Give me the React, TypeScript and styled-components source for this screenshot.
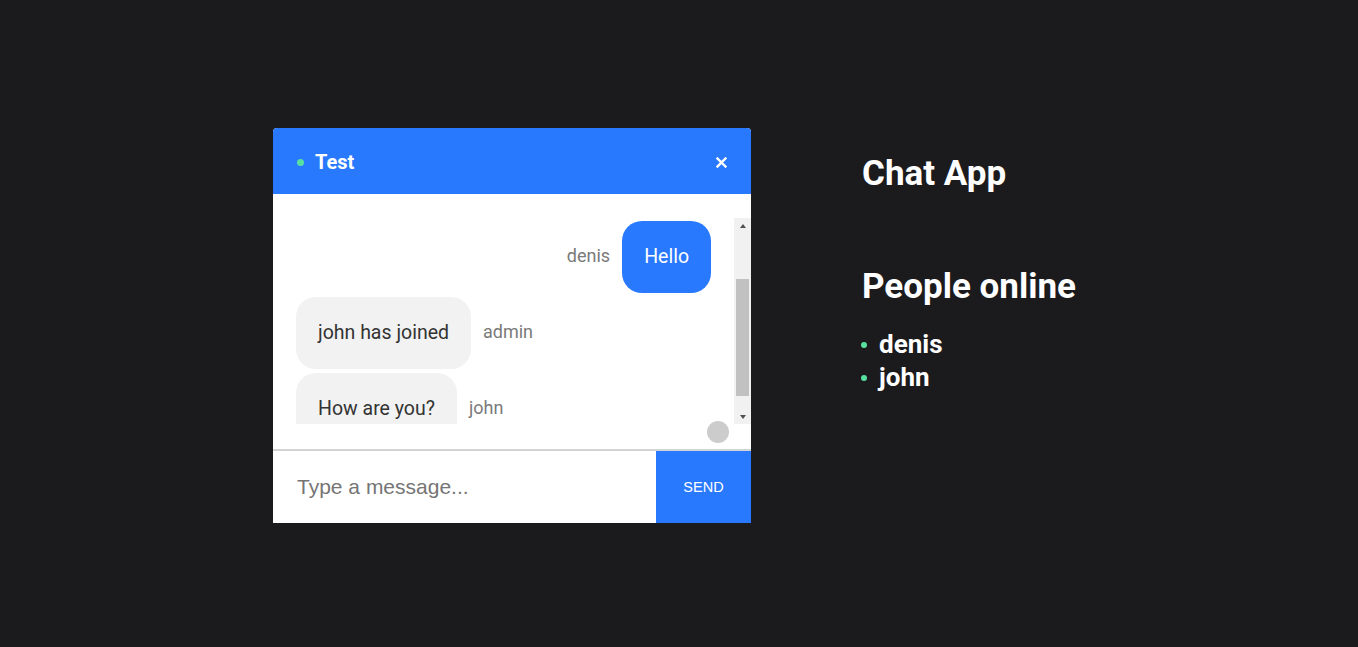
import { useLayoutEffect, useRef, useState } from 'react'
import styled, { createGlobalStyle } from 'styled-components'

const colors = {
  page: '#1b1b1d',
  blue: '#2979ff',
  green: '#57e0a0',
  bubble: '#f2f2f2',
  label: '#7a7a7a',
  text: '#333333',
  track: '#f1f1f1',
  thumb: '#c1c1c1',
  arrow: '#505050',
}

const GlobalStyle = createGlobalStyle`
  * { box-sizing: border-box; }
  html, body {
    margin: 0;
    padding: 0;
    background: ${colors.page};
    font-family: Roboto, "Liberation Sans", sans-serif;
  }
`

const Page = styled.main`
  min-height: 647px;
  display: flex;
  justify-content: center;
  align-items: flex-start;
  gap: 111px;
  padding-top: 128px;
`

const ChatWindow = styled.section`
  width: 478px;
  background: #fff;
  border-radius: 4px 4px 0 0;
  overflow: hidden;
  display: flex;
  flex-direction: column;
`

const Header = styled.header`
  height: 66px;
  background: ${colors.blue};
  display: flex;
  align-items: center;
  padding: 2px 24px 0;
  color: #fff;
`

const Dot = styled.span<{ $size?: number }>`
  width: ${(p) => p.$size ?? 7}px;
  height: ${(p) => p.$size ?? 7}px;
  border-radius: 50%;
  background: ${colors.green};
  flex-shrink: 0;
`

const RoomName = styled.h2`
  margin: 0 0 0 11px;
  font-size: 20px;
  font-weight: 700;
  flex: 1;
`

const CloseButton = styled.button`
  border: none;
  background: none;
  padding: 0;
  display: flex;
  cursor: pointer;
`

const Body = styled.div`
  padding-top: 24px;
  padding-bottom: 6px;
  border-bottom: 2px solid #d3d3d3;
  display: flex;
  flex-direction: column;
`

const Viewport = styled.div`
  height: 206px;
  display: flex;
`

const Messages = styled.div`
  flex: 1;
  overflow: hidden;
  padding: 82px 23px 0;
  display: flex;
  flex-direction: column;
  gap: 4px;
`

const ScrollBar = styled.div`
  width: 17px;
  background: ${colors.track};
  display: flex;
  flex-direction: column;
`

const ScrollArrow = styled.span<{ $down?: boolean }>`
  height: 16px;
  display: flex;
  align-items: center;
  justify-content: center;
  padding-${(p) => (p.$down ? 'top' : 'bottom')}: 1px;

  &::before {
    content: '';
    border-left: 3.5px solid transparent;
    border-right: 3.5px solid transparent;
    border-${(p) => (p.$down ? 'top' : 'bottom')}: 4px solid ${colors.arrow};
  }
`

const ScrollTrack = styled.div`
  flex: 1;
  padding: 0 2px;
`

const ScrollThumb = styled.div`
  background: ${colors.thumb};
`

const MessageRow = styled.div<{ $mine?: boolean }>`
  display: flex;
  flex-direction: ${(p) => (p.$mine ? 'row-reverse' : 'row')};
  align-items: center;
  gap: 12px;
  flex-shrink: 0;
`

const Bubble = styled.div<{ $mine?: boolean }>`
  padding: 24px 22px;
  font-size: 19.5px;
  line-height: 24px;
  border-radius: 20px;
  background: ${(p) => (p.$mine ? colors.blue : colors.bubble)};
  color: ${(p) => (p.$mine ? '#fff' : colors.text)};
  white-space: nowrap;
`

const Author = styled.span`
  font-size: 18px;
  line-height: 22px;
  padding-bottom: 2px;
  color: ${colors.label};
`

const TypingRow = styled.div`
  display: flex;
  justify-content: flex-end;
  padding-right: 22px;
  margin-top: -3px;
`

const Typing = styled.span`
  width: 22px;
  height: 22px;
  border-radius: 50%;
  background: #cccccc;
`

const Composer = styled.form`
  display: flex;
  height: 72px;
`

const MessageInput = styled.input`
  flex: 1;
  min-width: 0;
  border: none;
  outline: none;
  padding: 0 24px;
  font-family: "Liberation Sans", Arial, sans-serif;
  font-size: 21px;
  color: #333;

  &::placeholder {
    color: #757575;
  }
`

const SendButton = styled.button`
  width: 95px;
  border: none;
  background: ${colors.blue};
  color: #fff;
  font-family: "Liberation Sans", Arial, sans-serif;
  font-size: 14.5px;
  cursor: pointer;
`

const Sidebar = styled.aside`
  width: 223px;
  color: #fff;
  padding-top: 24px;
`

const Title = styled.h1<{ $gap?: number }>`
  margin: 0 0 ${(p) => p.$gap ?? 0}px;
  font-size: 35px;
  font-weight: 700;
  line-height: 44px;
  white-space: nowrap;
`

const UserList = styled.ul`
  list-style: none;
  margin: 0 0 0 -1px;
  padding: 0;
`

const User = styled.li`
  display: flex;
  align-items: center;
  gap: 12px;
  font-size: 26px;
  font-weight: 700;
  line-height: 33px;
`

const messages = [
  { id: 1, author: 'denis', text: 'Hello', mine: true },
  { id: 2, author: 'admin', text: 'john has joined', mine: false },
  { id: 3, author: 'john', text: 'How are you?', mine: false },
]

const users = ['denis', 'john']

const ARROW = 16

const App = () => {
  const listRef = useRef<HTMLDivElement>(null)
  const [thumb, setThumb] = useState({ top: 0, height: 0 })

  useLayoutEffect(() => {
    const el = listRef.current
    if (!el) return
    el.scrollTop = 79
    const track = el.clientHeight - ARROW * 2
    const height = (track * el.clientHeight) / el.scrollHeight
    const max = el.scrollHeight - el.clientHeight
    const top = max > 0 ? (el.scrollTop / max) * (track - height) : 0
    setThumb({ top, height })
  }, [])

  return (
    <>
      <GlobalStyle />
      <Page>
        <ChatWindow>
          <Header>
            <Dot />
            <RoomName>Test</RoomName>
            <CloseButton aria-label="close">
              <svg width="11" height="11" viewBox="0 0 11 11">
                <path d="M1.5 1.5 L9.5 9.5 M9.5 1.5 L1.5 9.5" stroke="#fff" strokeWidth="2.4" strokeLinecap="square" />
              </svg>
            </CloseButton>
          </Header>
          <Body>
            <Viewport>
              <Messages ref={listRef}>
                {messages.map((m) => (
                  <MessageRow key={m.id} $mine={m.mine}>
                    <Bubble $mine={m.mine}>{m.text}</Bubble>
                    <Author>{m.author}</Author>
                  </MessageRow>
                ))}
              </Messages>
              <ScrollBar>
                <ScrollArrow />
                <ScrollTrack>
                  <ScrollThumb style={{ marginTop: thumb.top, height: thumb.height }} />
                </ScrollTrack>
                <ScrollArrow $down />
              </ScrollBar>
            </Viewport>
            <TypingRow>
              <Typing />
            </TypingRow>
          </Body>
          <Composer onSubmit={(e) => e.preventDefault()}>
            <MessageInput placeholder="Type a message..." />
            <SendButton type="submit">SEND</SendButton>
          </Composer>
        </ChatWindow>
        <Sidebar>
          <Title $gap={69}>Chat App</Title>
          <Title $gap={19}>People online</Title>
          <UserList>
            {users.map((u) => (
              <User key={u}>
                <Dot $size={6} />
                {u}
              </User>
            ))}
          </UserList>
        </Sidebar>
      </Page>
    </>
  )
}

export default App
